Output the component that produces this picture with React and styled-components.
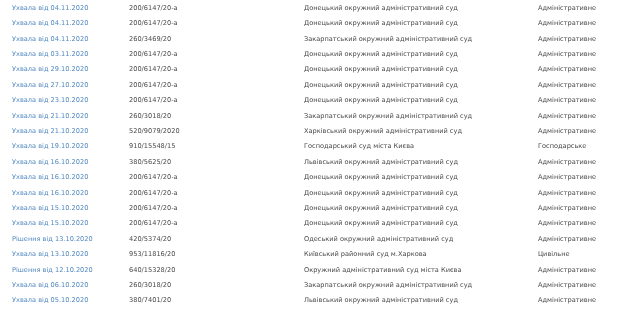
import React from "react";
import styled, { createGlobalStyle } from "styled-components";

const Global = createGlobalStyle`
  html, body { margin: 0; padding: 0; background: #fff; }
  body {
    font-family: "DejaVu Sans", Verdana, sans-serif;
    -webkit-font-smoothing: antialiased;
  }
`;

const Table = styled.div`
  display: flex;
  flex-direction: column;
  padding: 0 0 0 12px;
  width: 621px;
  box-sizing: border-box;
  will-change: transform;
  transform: translateZ(0);
`;

const Row = styled.div`
  display: grid;
  grid-template-columns: 117px 175px 234px 1fr;
  align-items: center;
  height: 15.42px;
  font-size: 6.6px;
  color: #4a4a4a;
  white-space: nowrap;
`;

const DocLink = styled.span`
  color: #5289c0;
  cursor: pointer;
`;

const Cell = styled.span`
  color: #4a4a4a;
`;

const rows = [
  ["Ухвала від 04.11.2020", "200/6147/20-а", "Донецький окружний адміністративний суд", "Адміністративне"],
  ["Ухвала від 04.11.2020", "200/6147/20-а", "Донецький окружний адміністративний суд", "Адміністративне"],
  ["Ухвала від 04.11.2020", "260/3469/20", "Закарпатський окружний адміністративний суд", "Адміністративне"],
  ["Ухвала від 03.11.2020", "200/6147/20-а", "Донецький окружний адміністративний суд", "Адміністративне"],
  ["Ухвала від 29.10.2020", "200/6147/20-а", "Донецький окружний адміністративний суд", "Адміністративне"],
  ["Ухвала від 27.10.2020", "200/6147/20-а", "Донецький окружний адміністративний суд", "Адміністративне"],
  ["Ухвала від 23.10.2020", "200/6147/20-а", "Донецький окружний адміністративний суд", "Адміністративне"],
  ["Ухвала від 21.10.2020", "260/3018/20", "Закарпатський окружний адміністративний суд", "Адміністративне"],
  ["Ухвала від 21.10.2020", "520/9079/2020", "Харківський окружний адміністративний суд", "Адміністративне"],
  ["Ухвала від 19.10.2020", "910/15548/15", "Господарський суд міста Києва", "Господарське"],
  ["Ухвала від 16.10.2020", "380/5625/20", "Львівський окружний адміністративний суд", "Адміністративне"],
  ["Ухвала від 16.10.2020", "200/6147/20-а", "Донецький окружний адміністративний суд", "Адміністративне"],
  ["Ухвала від 16.10.2020", "200/6147/20-а", "Донецький окружний адміністративний суд", "Адміністративне"],
  ["Ухвала від 15.10.2020", "200/6147/20-а", "Донецький окружний адміністративний суд", "Адміністративне"],
  ["Ухвала від 15.10.2020", "200/6147/20-а", "Донецький окружний адміністративний суд", "Адміністративне"],
  ["Рішення від 13.10.2020", "420/5374/20", "Одеський окружний адміністративний суд", "Адміністративне"],
  ["Ухвала від 13.10.2020", "953/11816/20", "Київський районний суд м.Харкова", "Цивільне"],
  ["Рішення від 12.10.2020", "640/15328/20", "Окружний адміністративний суд міста Києва", "Адміністративне"],
  ["Ухвала від 06.10.2020", "260/3018/20", "Закарпатський окружний адміністративний суд", "Адміністративне"],
  ["Ухвала від 05.10.2020", "380/7401/20", "Львівський окружний адміністративний суд", "Адміністративне"],
];

export default function App() {
  return (
    <>
      <Global />
      <Table>
        {rows.map((r, i) => (
          <Row key={i}>
            <span><DocLink>{r[0]}</DocLink></span>
            <Cell>{r[1]}</Cell>
            <Cell>{r[2]}</Cell>
            <Cell>{r[3]}</Cell>
          </Row>
        ))}
      </Table>
    </>
  );
}
